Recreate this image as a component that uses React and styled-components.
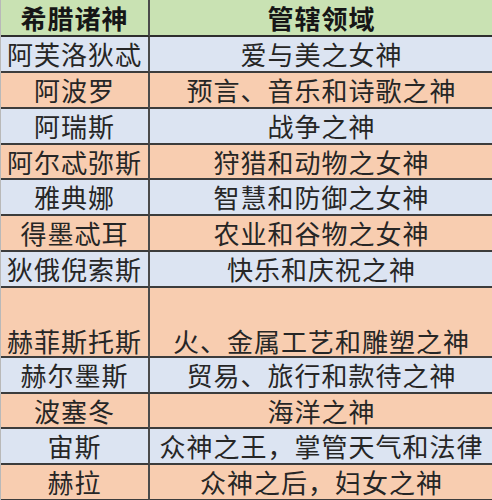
import { Fragment } from 'react';
import styled, { createGlobalStyle } from "styled-components";

const GlobalStyle = createGlobalStyle`
  body {
    margin: 0;
    background: #ffffff;
  }
`;

const colors = {
  head: '#c9e2b3',
  blue: '#dce4f2',
  orange: '#f8cdb0',
};

const Table = styled.div`
  display: grid;
  grid-template-columns: 149px 343px;
  width: 492px;
  height: 500px;
  overflow: hidden;
  border-left: 1px solid #b9b9b9;
  box-sizing: border-box;
  font-family: "Noto Sans CJK SC", "Noto Sans", sans-serif;
`;

const Cell = styled.div`
  box-sizing: border-box;
  height: ${props => props.$h}px;
  background: ${props => props.$bg};
  border-bottom: 2px solid #3c3c3c;
  border-right: ${props => props.$first ? '2px solid #4a4a4a' : 'none'};
  display: flex;
  justify-content: center;
  align-items: ${props => props.$bottom ? 'flex-end' : 'center'};
  padding-bottom: ${props => props.$bottom ? '2px' : '0'};
  font-size: 26px;
  line-height: 1;
  letter-spacing: 1px;
  color: #262626;
  white-space: nowrap;
`;

const HeadCell = styled(Cell)`
  font-weight: 700;
  color: #161616;
  border-bottom: 2px solid #2e2e2e;
`;

const rows = [
  { god: '阿芙洛狄忒', domain: '爱与美之女神', h: 36, bg: colors.blue },
  { god: '阿波罗', domain: '预言、音乐和诗歌之神', h: 36, bg: colors.orange },
  { god: '阿瑞斯', domain: '战争之神', h: 36, bg: colors.blue },
  { god: '阿尔忒弥斯', domain: '狩猎和动物之女神', h: 35, bg: colors.orange },
  { god: '雅典娜', domain: '智慧和防御之女神', h: 36, bg: colors.blue },
  { god: '得墨忒耳', domain: '农业和谷物之女神', h: 36, bg: colors.orange },
  { god: '狄俄倪索斯', domain: '快乐和庆祝之神', h: 36, bg: colors.blue },
  { god: '赫菲斯托斯', domain: '火、金属工艺和雕塑之神', h: 70, bg: colors.orange, bottom: true },
  { god: '赫尔墨斯', domain: '贸易、旅行和款待之神', h: 36, bg: colors.blue },
  { god: '波塞冬', domain: '海洋之神', h: 35, bg: colors.orange },
  { god: '宙斯', domain: '众神之王，掌管天气和法律', h: 36, bg: colors.blue },
  { god: '赫拉', domain: '众神之后，妇女之神', h: 36, bg: colors.orange },
];

export default function App() {
  return (
    <>
      <GlobalStyle />
      <Table>
        <HeadCell $first $h={37} $bg={colors.head}>希腊诸神</HeadCell>
        <HeadCell $h={37} $bg={colors.head}>管辖领域</HeadCell>
        {rows.map(row => (
          <Fragment key={row.god}>
            <Cell $first $h={row.h} $bg={row.bg} $bottom={row.bottom}>{row.god}</Cell>
            <Cell $h={row.h} $bg={row.bg} $bottom={row.bottom}>{row.domain}</Cell>
          </Fragment>
        ))}
      </Table>
    </>
  );
}
